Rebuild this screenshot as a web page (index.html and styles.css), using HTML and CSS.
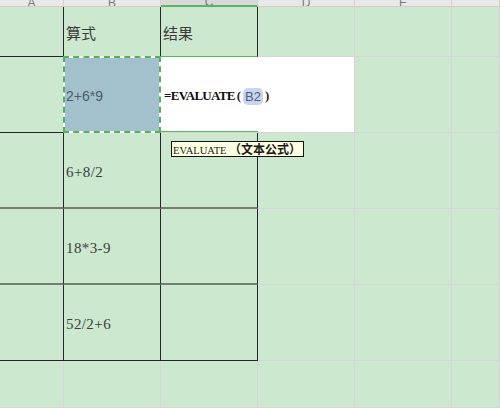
FILE: index.html
```html
<!DOCTYPE html>
<html lang="zh-CN">
<head>
    <meta charset="UTF-8" />
    <meta name="viewport" content="width=device-width, initial-scale=1.0" />
    <title>EVALUATE</title>
    <link rel="stylesheet" href="styles.css">
</head>
<body>
    <div class="sheet">
        <!-- column headers -->
        <div class="hd"><span>A</span></div>
        <div class="hd"><span>B</span></div>
        <div class="hd hd-active"><span>C</span></div>
        <div class="hd"><span>D</span></div>
        <div class="hd"><span>E</span></div>
        <div class="hd"></div>

        <!-- row 1 -->
        <div class="cell dr db"></div>
        <div class="cell dr db cjk">算式</div>
        <div class="cell dr gr-b cjk">结果</div>
        <div class="cell"></div>
        <div class="cell"></div>
        <div class="cell"></div>

        <!-- row 2 -->
        <div class="cell dr db"></div>
        <div class="sel"><div class="sel-fill">2+6*9</div></div>
        <div class="cell editor">
            <span class="fn">=EVALUATE</span><span class="paren">(</span><span class="ref">B2</span><span class="paren">)</span>
        </div>
        <div class="cell"></div>
        <div class="cell"></div>

        <!-- row 3 -->
        <div class="cell dr gb"></div>
        <div class="cell dr gb num">6+8/2</div>
        <div class="cell dr gb"></div>
        <div class="cell"></div>
        <div class="cell"></div>
        <div class="cell"></div>

        <!-- row 4 -->
        <div class="cell dr gb"></div>
        <div class="cell dr gb num">18*3-9</div>
        <div class="cell dr gb"></div>
        <div class="cell"></div>
        <div class="cell"></div>
        <div class="cell"></div>

        <!-- row 5 -->
        <div class="cell dr db"></div>
        <div class="cell dr db num">52/2+6</div>
        <div class="cell dr db"></div>
        <div class="cell"></div>
        <div class="cell"></div>
        <div class="cell"></div>

        <!-- row 6 -->
        <div class="cell"></div>
        <div class="cell"></div>
        <div class="cell"></div>
        <div class="cell"></div>
        <div class="cell"></div>
        <div class="cell"></div>

        <div class="tip"><span class="tip-fn">EVALUATE</span> <span class="tip-arg">（文本公式）</span></div>
    </div>
</body>
</html>
```

FILE: styles.css
```css
/* Reset */
* {
    box-sizing: border-box;
    margin: 0;
    padding: 0;
}
body {
    width: 500px;
    height: 408px;
    overflow: hidden;
    background: #cce8ce;
    font-family: "Liberation Serif", "Noto Sans CJK SC", serif;
    color: #333;
}

/* Sheet grid */
.sheet {
    position: relative;
    display: grid;
    grid-template-columns: 64px 97px 97px 97px 97px 1fr;
    grid-template-rows: 7px 50px 76px 76px 76px 76px 1fr;
    width: 500px;
    height: 408px;
}

.hd {
    display: flex;
    justify-content: center;
    align-items: flex-end;
    overflow: hidden;
    background: #e8e8e8;
    border-right: 1px solid #d2d2d2;
    border-bottom: 1px solid #cfcfcf;
    font-family: "Liberation Sans", sans-serif;
    font-size: 12px;
    color: #7a7a7a;
}
.hd span {
    line-height: 14px;
    margin-bottom: -4px;
}
.hd-active {
    background: #d9d9d9;
    border-bottom: 2px solid #5bb362;
}

/* Cells */
.cell {
    display: flex;
    align-items: center;
    padding-left: 2px;
    border-right: 1px solid #d5d5d5;
    border-bottom: 1px solid #d5d5d5;
    white-space: nowrap;
}
.dr {
    border-right-color: #262626;
}
.db {
    border-bottom-color: #262626;
}
.gb {
    border-bottom: 2px solid #747c74;
}
.gr-b {
    border-bottom-color: #5bb362;
}
.cjk {
    font-family: "Noto Sans CJK SC", sans-serif;
    font-size: 15px;
    color: #3a3a3a;
    padding-top: 2px;
}
.num {
    font-size: 15px;
    letter-spacing: 0.4px;
    color: #3d3d3d;
    padding-top: 4px;
}

/* Selected cell B2 */
.sel {
    margin: -1px 0 0 -1px;
    background: #fff;
    border: 2px dashed #55b05c;
}
.sel-fill {
    height: 100%;
    display: flex;
    align-items: center;
    padding-left: 1px;
    padding-top: 3px;
    background: #a3c1cd;
    font-family: "Liberation Sans", sans-serif;
    font-size: 14px;
    color: #4f5a69;
}

/* In-cell editor C2 */
.editor {
    grid-column: span 2;
    padding-left: 3px;
    padding-top: 3px;
    background: linear-gradient(#5bb362, #5bb362) left bottom / 97px 1px no-repeat, #fff;
    font-size: 12px;
    color: #111;
}
.fn {
    font-weight: bold;
    font-size: 13px;
    letter-spacing: -0.7px;
}
.paren {
    font-weight: bold;
    font-size: 13px;
    margin: 0 2px;
    color: #2a2420;
}
.ref {
    padding: 1px 2px;
    border-radius: 5px;
    background: #c8d5ef;
    font-family: "Liberation Sans", sans-serif;
    font-size: 13px;
    color: #4d5a78;
}

/* Function tooltip */
.tip {
    position: absolute;
    left: 171px;
    top: 141px;
    width: 133px;
    height: 16px;
    padding-left: 1px;
    background: #ffffe1;
    border: 1px solid #111;
    font-size: 10.5px;
    line-height: 14px;
    color: #222;
    white-space: nowrap;
}
.tip-arg {
    font-family: "Noto Sans CJK SC", sans-serif;
    font-size: 12px;
    font-weight: bold;
    color: #1a1a1a;
}
```
